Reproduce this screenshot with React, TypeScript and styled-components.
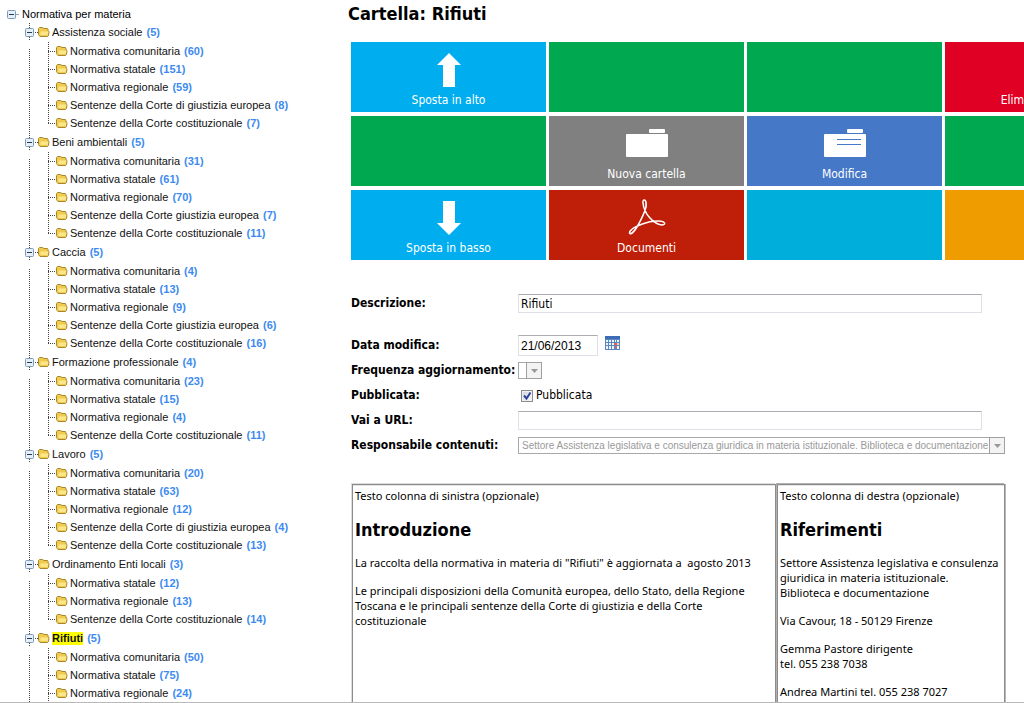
import React from "react";
import styled, { createGlobalStyle } from "styled-components";

const uiFont = `"DejaVu Sans Condensed", "Noto Sans", sans-serif`;
const textFont = `"Noto Sans", "Open Sans", sans-serif`;
const treeFont = `"Liberation Sans", Arial, sans-serif`;

const GlobalStyle = createGlobalStyle`
  *, *::before, *::after { box-sizing: border-box; }
  body { margin: 0; background: #fff; color: #000; font-family: ${uiFont}; font-size: 12px; line-height: 15px; }
`;

const Page = styled.div`
  display: flex;
  height: 100vh;
  overflow: hidden;
  border-bottom: 1px solid #b8b8b8;
`;

const Sidebar = styled.nav`
  flex: 0 0 348px;
  padding: 5px 0 0 7px;
  font-family: ${treeFont};
  font-size: 11px;
`;

const List = styled.ul`
  list-style: none;
  margin: 0;
  padding: 0;
`;

const Group = styled.li`
  padding-bottom: 1px;
`;

const Row = styled.div`
  display: flex;
  align-items: center;
  height: 18px;
  white-space: nowrap;
`;

const dotsY = "repeating-linear-gradient(to bottom, #444 0 1px, transparent 1px 2px)";
const dotsX = "repeating-linear-gradient(to right, #444 0 1px, transparent 1px 2px)";

const Children = styled.ul`
  list-style: none;
  margin: 0;
  padding: 1px 0 0;
  background: ${dotsY} 22px 8px / 1px 100% no-repeat;
`;

const Guide = styled.span<{ $last?: boolean }>`
  flex: none;
  align-self: stretch;
  width: 8px;
  margin-left: 41px;
  background: ${dotsY} 0 0 / 1px ${(p) => (p.$last ? "10px" : "100%")} no-repeat,
    ${dotsX} 0 9px / 8px 1px no-repeat;
`;

const Toggle = styled.button<{ $nested?: boolean }>`
  flex: none;
  display: flex;
  align-items: center;
  align-self: stretch;
  width: ${(p) => (p.$nested ? "13px" : "15px")};
  margin-left: ${(p) => (p.$nested ? "18px" : "0")};
  border: 0;
  padding: 0;
  background: ${(p) =>
    p.$nested
      ? `${dotsY} 4px 0 / 1px 100% no-repeat, ${dotsX} 10px 9px / 3px 1px no-repeat`
      : "linear-gradient(#8aa0bb, #8aa0bb) 9px 9px / 3px 1px no-repeat"};
`;

const TreeLink = styled.a<{ $selected?: boolean }>`
  margin-left: 2px;
  color: #111;
  text-decoration: none;
  line-height: 13px;
  font-weight: ${(p) => (p.$selected ? "bold" : "normal")};
  background: ${(p) => (p.$selected ? "#ffff00" : "none")};
`;

const Count = styled.span`
  margin-left: 4px;
  color: #3d8bef;
  font-weight: bold;
`;

const Main = styled.main`
  flex: 1;
  min-width: 0;
  overflow: hidden;
  padding-top: 3px;
`;

const Title = styled.h1`
  margin: 0 0 17px;
  font-size: 18px;
  line-height: 22px;
`;

const Tiles = styled.div`
  display: grid;
  grid-template-columns: repeat(4, 195px);
  grid-auto-rows: 70px;
  gap: 4px 3px;
  margin-left: 3px;
`;

const Tile = styled.button<{ $color: string }>`
  display: flex;
  flex-direction: column;
  align-items: center;
  justify-content: flex-end;
  gap: 6px;
  border: 0;
  padding: 0 0 4px;
  background: ${(p) => p.$color};
  color: #fff;
  font: 12px/15px ${uiFont};
`;

const Form = styled.form`
  margin: 34px 0 0 3px;
`;

const FormRow = styled.div<{ $spaced?: boolean }>`
  display: grid;
  grid-template-columns: 167px minmax(0, 487px);
  align-items: center;
  height: ${(p) => (p.$spaced ? "19px" : "25px")};
  margin-bottom: ${(p) => (p.$spaced ? "20px" : "0")};
`;

const Label = styled.label`
  font-weight: bold;
  white-space: nowrap;
`;

const Field = styled.div`
  display: flex;
  align-items: center;
`;

const TextInput = styled.input<{ $short?: boolean }>`
  width: ${(p) => (p.$short ? "80px" : "464px")};
  height: ${(p) => (p.$short ? "21px" : "19px")};
  padding: 0 2px;
  border: 1px solid #dde0e6;
  border-top-color: #abadb3;
  background: #fff;
  color: #000;
  font: 12px ${(p) => (p.$short ? treeFont : uiFont)};
`;

const IconButton = styled.button`
  display: flex;
  border: 0;
  margin: 0 0 6px 7px;
  padding: 0;
  background: none;
`;

const SelectBox = styled.div<{ $short?: boolean }>`
  position: relative;
  width: ${(p) => (p.$short ? "24px" : "100%")};
  height: 17px;
`;

const Select = styled.select`
  appearance: none;
  display: block;
  width: 100%;
  height: 100%;
  border: 1px solid #a8a8a8;
  border-radius: 0;
  padding: 0 16px 0 3px;
  background: #fff;
  color: #999;
  opacity: 1;
  font: 10px ${treeFont};
`;

const Arrow = styled.span`
  position: absolute;
  top: 0;
  right: 0;
  width: 16px;
  height: 17px;
  display: flex;
  align-items: center;
  justify-content: center;
  border: 1px solid #a0a0a0;
  background: #f3f3f3;
  pointer-events: none;
`;

const CheckLabel = styled.label`
  display: flex;
  align-items: center;
  gap: 3px;
  margin-left: 3px;
`;

const CheckBox = styled.span`
  position: relative;
  display: flex;
  width: 12px;
  height: 12px;

  input {
    appearance: none;
    margin: 0;
    width: 12px;
    height: 12px;
    border: 1px solid #8a8f94;
    background: linear-gradient(135deg, #cfd6dd, #fafafa);
    box-shadow: inset 0 0 0 1px #f0f0f0;
  }
  svg {
    position: absolute;
    inset: 0;
    pointer-events: none;
  }
  input:not(:checked) + svg { display: none; }
`;

const Columns = styled.div`
  display: grid;
  grid-template-columns: 425px minmax(0, 229px);
  margin: 26px 0 0 3px;
  font: 11px/15px ${textFont};
`;

const Column = styled.section`
  height: 400px;
  padding: 3px 2px 0;
  border: solid #8c8c8c;
  border-width: 1px;
  border-left-color: #8c8c8c;
  box-shadow: inset 0 1px 0 #e4e4e4, -1px -1px 0 #dcdcdc;
  margin-left: 1px;

  & + & { box-shadow: inset 0 1px 0 #e4e4e4, -1px -1px 0 #b0b0b0, 1px 0 0 #b8b8b8; }
`;

const Heading = styled.h2`
  margin: 16px 0 14px;
  font: bold 18px/22px ${uiFont};
`;

const Text = styled.p`
  margin: 0 0 13px;
  white-space: pre-line;
`;

const Minus = () => (
  <svg width="9" height="9" viewBox="0 0 9 9" aria-hidden="true">
    <rect x=".5" y=".5" width="8" height="8" rx="1" fill="#e6eef8" stroke="#7d9ab8" />
    <path d="M2 4.5h5" stroke="#223a5a" />
  </svg>
);

const FolderSvg = styled.svg`
  flex: none;
`;

const TreeFolder = () => (
  <FolderSvg width="12" height="10" viewBox="0 0 12 10" aria-hidden="true">
    <path d="M.5 7.500V1.500l1-1h3l1.500 1h3.500l.5 1V4l1 .5-.5 4-1 1H2z" fill="#f0cb4c" stroke="#a8862e" />
    <path d="M2.500 4.500h8L9.500 8h-7z" fill="#fbe68a" />
  </FolderSvg>
);

const ArrowIcon = ({ down }: { down?: boolean }) => (
  <svg width="24" height="34" viewBox="0 0 24 34" aria-hidden="true">
    <path fill="#fff" d={down ? "M6 0h12v22h6L12 34 0 22h6z" : "M6 34V12H0L12 0l12 12h-6v22z"} />
  </svg>
);

const FolderIcon = ({ lines }: { lines?: boolean }) => (
  <svg width="42" height="32" viewBox="0 0 42 32" aria-hidden="true">
    <rect x="23" width="16" height="4" rx="1" fill="#fff" />
    <rect y="5" width="42" height="23" rx="1" fill="#fff" />
    {lines && <path d="M13 10.500h24M13 15.500h24" stroke="#4678c8" />}
  </svg>
);

const PdfIcon = () => (
  <svg width="38" height="36" viewBox="0 0 38 36" fill="none" stroke="#fff" strokeLinecap="round" aria-hidden="true">
    <path strokeWidth="1.500" d="M18 3.500C17.500 0 14.500 0 15 4c.5 5 2.500 10 6.500 14.500C26 23.500 31 26 34.500 26c3.500-.3 2.500-3.500-1.500-3.800-6-.5-12 .3-20 3.300C6.500 28 1.500 31.500 1.500 34c1 2.500 4.500-1 7.500-6 4-7 7.500-14 9-20z" />
    <path strokeWidth="1" d="M18 8c.4-2 .3-3.500 0-4.500M2 34.500c2 0 4-2.500 6-5.500" />
  </svg>
);

const CalendarIcon = () => (
  <svg width="15" height="14" viewBox="0 0 15 14" aria-hidden="true">
    <rect width="15" height="14" fill="#5b86c4" />
    <rect width="15" height="3" fill="#3c6db4" />
    <path fill="#eef4fc" d="M1 4h2v2H1zM4 4h2v2H4zM7 4h2v2H7zM10 4h1v2h-1zM12 4h2v2h-2zM1 7h2v2H1zM4 7h2v2H4zM7 7h2v2H7zM1 10h2v3H1zM4 10h2v3H4zM7 10h2v3H7zM12 10h2v3h-2z" />
    <path fill="#e2604c" d="M9 7h3v2H9zM10 10h2v2h-2z" />
    <path fill="#f6d6d0" d="M12 7h2v2h-2z" />
  </svg>
);

const Triangle = () => (
  <svg width="7" height="4" viewBox="0 0 7 4" aria-hidden="true">
    <path d="M0 0h7L3.500 4z" fill="#999" />
  </svg>
);

const COM = "Normativa comunitaria";
const STA = "Normativa statale";
const REG = "Normativa regionale";
const GIU = "Sentenze della Corte giustizia europea";
const DIG = "Sentenze della Corte di giustizia europea";
const COS = "Sentenze della Corte costituzionale";

type Folder = { name: string; items: [string, number][]; total: number; selected?: boolean };

const folders: Folder[] = [
  { name: "Assistenza sociale", total: 5, items: [[COM, 60], [STA, 151], [REG, 59], [DIG, 8], [COS, 7]] },
  { name: "Beni ambientali", total: 5, items: [[COM, 31], [STA, 61], [REG, 70], [GIU, 7], [COS, 11]] },
  { name: "Caccia", total: 5, items: [[COM, 4], [STA, 13], [REG, 9], [GIU, 6], [COS, 16]] },
  { name: "Formazione professionale", total: 4, items: [[COM, 23], [STA, 15], [REG, 4], [COS, 11]] },
  { name: "Lavoro", total: 5, items: [[COM, 20], [STA, 63], [REG, 12], [DIG, 4], [COS, 13]] },
  { name: "Ordinamento Enti locali", total: 3, items: [[STA, 12], [REG, 13], [COS, 14]] },
  { name: "Rifiuti", total: 5, selected: true, items: [[COM, 50], [STA, 75], [REG, 24]] },
];

type TileData = { color: string; label?: string; icon?: React.ReactNode };

const tiles: TileData[] = [
  { color: "#00adef", label: "Sposta in alto", icon: <ArrowIcon /> },
  { color: "#00a84f" },
  { color: "#00a84f" },
  { color: "#e00024", label: "Elimina cartella" },
  { color: "#00a84f" },
  { color: "#808080", label: "Nuova cartella", icon: <FolderIcon /> },
  { color: "#4678c8", label: "Modifica", icon: <FolderIcon lines /> },
  { color: "#00a84f" },
  { color: "#00adef", label: "Sposta in basso", icon: <ArrowIcon down /> },
  { color: "#bf1e08", label: "Documenti", icon: <PdfIcon /> },
  { color: "#00aedb" },
  { color: "#ef9c00" },
];

export default function App() {
  return (
    <>
      <GlobalStyle />
      <Page>
        <Sidebar>
          <Row>
            <Toggle type="button" aria-label="Comprimi"><Minus /></Toggle>
            <span>Normativa per materia</span>
          </Row>
          <List>
            {folders.map((f) => (
              <Group key={f.name}>
                <Row>
                  <Toggle type="button" $nested aria-label="Comprimi"><Minus /></Toggle>
                  <TreeFolder />
                  <TreeLink href="#" $selected={f.selected}>{f.name}</TreeLink>
                  <Count>({f.total})</Count>
                </Row>
                <Children>
                  {f.items.map(([name, n], i) => (
                    <li key={name}>
                      <Row>
                        <Guide $last={!f.selected && i === f.items.length - 1} />
                        <TreeFolder />
                        <TreeLink href="#">{name}</TreeLink>
                        <Count>({n})</Count>
                      </Row>
                    </li>
                  ))}
                </Children>
              </Group>
            ))}
          </List>
        </Sidebar>
        <Main>
          <Title>Cartella: Rifiuti</Title>
          <Tiles>
            {tiles.map((t, i) => (
              <Tile key={i} type="button" $color={t.color}>
                {t.icon}
                {t.label && <span>{t.label}</span>}
              </Tile>
            ))}
          </Tiles>
          <Form>
            <FormRow $spaced>
              <Label htmlFor="descrizione">Descrizione:</Label>
              <Field><TextInput id="descrizione" defaultValue="Rifiuti" /></Field>
            </FormRow>
            <FormRow>
              <Label htmlFor="data">Data modifica:</Label>
              <Field>
                <TextInput id="data" $short defaultValue="21/06/2013" />
                <IconButton type="button" aria-label="Calendario"><CalendarIcon /></IconButton>
              </Field>
            </FormRow>
            <FormRow>
              <Label htmlFor="frequenza">Frequenza aggiornamento:</Label>
              <SelectBox $short>
                <Select id="frequenza" disabled><option /></Select>
                <Arrow><Triangle /></Arrow>
              </SelectBox>
            </FormRow>
            <FormRow>
              <Label htmlFor="pubblicata">Pubblicata:</Label>
              <CheckLabel>
                <CheckBox>
                  <input id="pubblicata" type="checkbox" defaultChecked />
                  <svg width="12" height="12" viewBox="0 0 12 12" aria-hidden="true">
                    <path d="M3 5.500l2.500 3 4-6" fill="none" stroke="#31459a" strokeWidth="2" />
                  </svg>
                </CheckBox>
                Pubblicata
              </CheckLabel>
            </FormRow>
            <FormRow>
              <Label htmlFor="url">Vai a URL:</Label>
              <Field><TextInput id="url" /></Field>
            </FormRow>
            <FormRow>
              <Label htmlFor="responsabile">Responsabile contenuti:</Label>
              <SelectBox>
                <Select id="responsabile" disabled>
                  <option>Settore Assistenza legislativa e consulenza giuridica in materia istituzionale. Biblioteca e documentazione</option>
                </Select>
                <Arrow><Triangle /></Arrow>
              </SelectBox>
            </FormRow>
          </Form>
          <Columns>
            <Column>
              Testo colonna di sinistra (opzionale)
              <Heading>Introduzione</Heading>
              <Text>La raccolta della normativa in materia di "Rifiuti" è aggiornata a&nbsp; agosto 2013</Text>
              <Text>Le principali disposizioni della Comunità europea, dello Stato, della Regione Toscana e le principali sentenze della Corte di giustizia e della Corte costituzionale</Text>
            </Column>
            <Column>
              Testo colonna di destra (opzionale)
              <Heading>Riferimenti</Heading>
              <Text>Settore Assistenza legislativa e consulenza giuridica in materia istituzionale. Biblioteca e documentazione</Text>
              <Text>Via Cavour, 18 - 50129 Firenze</Text>
              <Text>{"Gemma Pastore dirigente\ntel. 055 238 7038"}</Text>
              <Text>Andrea Martini tel. 055 238 7027</Text>
            </Column>
          </Columns>
        </Main>
      </Page>
    </>
  );
}
